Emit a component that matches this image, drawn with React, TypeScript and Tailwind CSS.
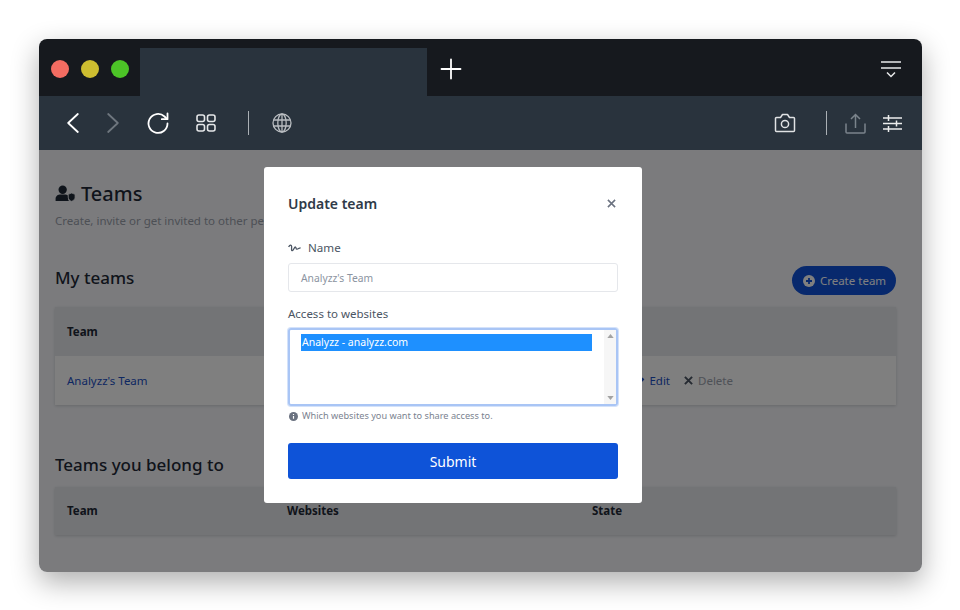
import React from "react";

const font = { fontFamily: '"Noto Sans", sans-serif' };

function TopBar() {
  return (
    <div className="flex h-[57px] shrink-0 bg-[#16191e]">
      <div className="flex w-[101px] shrink-0 items-center gap-[12px] pl-[12px] pt-[2px]">
        <span className="h-[18px] w-[18px] rounded-full bg-[#f36c62]" />
        <span className="h-[18px] w-[18px] rounded-full bg-[#cdbd30]" />
        <span className="h-[18px] w-[18px] rounded-full bg-[#4cc427]" />
      </div>
      <div className="mt-[9px] h-[48px] w-[287px] shrink-0 bg-[#29333d]" />
      <div className="flex w-[48px] shrink-0 items-center justify-center pt-[3px] text-white">
        <svg viewBox="0 0 24 24" fill="none" stroke="currentColor" strokeLinecap="round" className="h-[24px] w-[24px]">
          <path d="M12 2.500v19M2.500 12h19" strokeWidth="1.800" />
        </svg>
      </div>
      <div className="flex flex-1 items-center justify-end pr-[21px] pt-[3px] text-[#e8e9ea]">
        <svg viewBox="0 0 20 17" fill="none" stroke="currentColor" strokeWidth="1.500" className="h-[17px] w-[20px]">
          <path d="M0 1h20M0 7h20M6 11.500l4 4 4-4" />
        </svg>
      </div>
    </div>
  );
}

function ToolBar() {
  return (
    <div className="flex h-[54px] shrink-0 items-center bg-[#29333d] pl-[28px] pr-[20px] text-white">
      <svg viewBox="0 0 12 20" fill="none" stroke="currentColor" strokeWidth="1.800" strokeLinecap="round" strokeLinejoin="round" className="h-[20px] w-[12px]">
        <path d="M10.800 1 1.200 10l9.600 9" />
      </svg>
      <svg viewBox="0 0 12 20" fill="none" stroke="#6e767e" strokeWidth="1.800" strokeLinecap="round" strokeLinejoin="round" className="ml-[28px] h-[20px] w-[12px]">
        <path d="M1.200 1l9.600 9-9.600 9" />
      </svg>
      <svg viewBox="0 0 22 22" fill="none" stroke="currentColor" strokeWidth="1.800" strokeLinecap="round" strokeLinejoin="round" className="ml-[28px] h-[22px] w-[22px]">
        <path d="M20.500 11.500a9.500 9.500 0 1 1-3-7L20 7" />
        <path d="M20.500 1.500V7.200h-5.700" />
      </svg>
      <svg viewBox="0 0 20 18" fill="none" stroke="#e4e6e8" strokeWidth="1.600" className="ml-[27px] h-[18px] w-[20px]">
        <rect x="1" y="1" width="7.500" height="6.500" rx="2" />
        <rect x="11.500" y="1" width="7.500" height="6.500" rx="2" />
        <rect x="1" y="10.500" width="7.500" height="6.500" rx="2" />
        <rect x="11.500" y="10.500" width="7.500" height="6.500" rx="2" />
      </svg>
      <span className="ml-[32px] h-[24px] w-[1px] bg-[#aab0b5]" />
      <svg viewBox="0 0 20 20" fill="none" stroke="#b9bdc1" strokeWidth="1.300" className="ml-[23px] h-[20px] w-[20px]">
        <circle cx="10" cy="10" r="9" />
        <ellipse cx="10" cy="10" rx="4.200" ry="9" />
        <path d="M10 1v18M1.600 7h16.800M1.600 13h16.800" />
      </svg>
      <div className="flex-1" />
      <svg viewBox="0 0 22 20" fill="none" stroke="#e0e2e4" strokeWidth="1.500" strokeLinejoin="round" className="h-[20px] w-[22px]">
        <path d="M2.500 4.500h4l2-3h5l2 3h4a1 1 0 0 1 1 1v12a1 1 0 0 1-1 1h-17a1 1 0 0 1-1-1v-12a1 1 0 0 1 1-1z" />
        <circle cx="11" cy="11" r="3.600" />
      </svg>
      <span className="ml-[30px] h-[24px] w-[1px] bg-[#aab0b5]" />
      <svg viewBox="0 0 21 21" fill="none" stroke="#7b848c" strokeWidth="1.500" className="ml-[18px] h-[21px] w-[21px]">
        <path d="M1 10.500v8.500a1 1 0 0 0 1 1h17a1 1 0 0 0 1-1v-8.500M10.500 15V1.500M6 6l4.500-4.500L15 6" />
      </svg>
      <svg viewBox="0 0 19 19" fill="none" stroke="#eceded" strokeWidth="1.500" className="ml-[17px] h-[19px] w-[19px]">
        <path d="M0 4h19M0 9.500h19M0 15h19M5.500 1v6M13.500 6.500v6M5.500 12v6" />
      </svg>
    </div>
  );
}

function Page() {
  return (
    <div className="h-full bg-[#f6f7fb] pl-[16px] pr-[26px] pt-[30px] text-[#1f2937]">
      <div className="flex h-[27px] items-center gap-[5px]">
        <svg viewBox="0 0 22 18" className="h-[17px] w-[21px]" fill="#1f2937">
          <circle cx="8" cy="5" r="4.400" />
          <path d="M0.500 17v-2.500C0.500 11.500 3 10 6 10h4c1.600 0 2.800.4 3.600 1v3c0 1.300.4 2.300 1.200 3z" />
          <path d="M17.500 8.500l3.600 1.400v3c0 2.200-1.500 3.600-3.600 4.400-2.100-.8-3.600-2.200-3.600-4.400v-3z" stroke="#f6f7fb" strokeWidth="0.800" />
        </svg>
        <h1 className="text-[20px] font-medium leading-[27px]">Teams</h1>
      </div>
      <p className="mt-[4px] text-[11.500px] leading-[20px] text-[#9aa0ab]">Create, invite or get invited to other people's teams.</p>
      <div className="mt-[35px] flex h-[29px] items-start justify-between">
        <h2 className="text-[17px] font-medium leading-[24px]">My teams</h2>
        <div className="flex h-[29px] w-[104px] items-center justify-center gap-[5px] rounded-full bg-[#1153da] pl-[1px] text-[11.500px] text-white">
          <svg viewBox="0 0 12 12" className="h-[12px] w-[12px]">
            <circle cx="6" cy="6" r="6" fill="#fff" />
            <path d="M6 3v6M3 6h6" stroke="#1153da" strokeWidth="1.800" />
          </svg>
          Create team
        </div>
      </div>
      <div className="mt-[12px] shadow-[0_1px_3px_rgba(0,0,0,0.16)]">
        <div className="flex h-[49px] items-center bg-[#e7e8ec] pl-[12px] text-[11.500px] font-bold">Team</div>
        <div className="flex h-[49px] items-center justify-between bg-[#fefefe] pl-[12px] pr-[163px] text-[11.500px]">
          <span className="text-[#1a4fc4]">Analyzz's Team</span>
          <div className="flex items-center gap-[14px]">
            <span className="flex items-center gap-[4px] text-[#1a4fc4]">
              <svg viewBox="0 0 8 8" className="h-[8px] w-[8px]" fill="#1a4fc4">
                <path d="M0 8l.8-2.600L5.600.6 7.400 2.400 2.600 7.200z" />
              </svg>
              Edit
            </span>
            <span className="flex items-center gap-[5px] text-[#9ca3af]">
              <svg viewBox="0 0 10 10" className="h-[9px] w-[9px]" stroke="#4b5563" strokeWidth="2.200">
                <path d="M1 1l8 8M9 1l-8 8" />
              </svg>
              Delete
            </span>
          </div>
        </div>
      </div>
      <h2 className="mt-[47px] text-[17px] font-medium leading-[26px]">Teams you belong to</h2>
      <div className="mt-[9px] grid h-[48px] grid-cols-[220px_305px_1fr] items-center bg-[#e7e8ec] pl-[12px] text-[11.500px] font-bold shadow-[0_1px_3px_rgba(0,0,0,0.16)]">
        <span>Team</span>
        <span>Websites</span>
        <span>State</span>
      </div>
    </div>
  );
}

function Modal() {
  return (
    <div className="absolute inset-0 bg-black/50">
      <div className="absolute left-[225px] top-[17px] h-[336px] w-[378px] rounded-[3px] bg-white px-[24px] pt-[26px] text-[#374151]">
        <div className="flex h-[22px] items-center justify-between pr-[2px]">
          <h3 className="text-[14px] font-semibold leading-[22px] text-[#2f3a48]">Update team</h3>
          <svg viewBox="0 0 10 10" className="-mt-[2px] h-[9px] w-[9px]" stroke="#6b7280" strokeWidth="1.700">
            <path d="M1 1l8 8M9 1l-8 8" />
          </svg>
        </div>
        <div className="mt-[24px] flex h-[18px] items-center gap-[7px] text-[11.600px] text-[#4b5563]">
          <svg viewBox="0 0 13 9" className="h-[9px] w-[13px]" fill="none" stroke="#4b5563" strokeWidth="1.300">
            <path d="M.6 3C2 .6 3.400.8 3.600 2.400S3 7 4.400 6.600 6.400 2.600 7.400 3 7.600 5.400 9 5.200s2-1.400 3.600-1.400" />
          </svg>
          Name
        </div>
        <div className="mt-[6px] flex h-[29px] items-center rounded-[3px] border border-[#e5e7eb] pl-[12px] pt-[3px] text-[10.300px] text-[#8c94a1]">Analyzz's Team</div>
        <div className="mt-[13px] text-[11.500px] leading-[18px] text-[#4b5563]">Access to websites</div>
        <div className="mt-[5px] flex h-[78px] rounded-[3px] border-2 border-[#a9c5f5] pl-[11px] pt-[4px] shadow-[0_0_0_1px_rgba(169,197,245,0.5)]">
          <div className="mr-[12px] h-[17px] flex-1 bg-[#1e90ff] pl-[1px] text-[10.500px] leading-[17px] text-white">Analyzz - analyzz.com</div>
          <div className="-mt-[4px] flex w-[12px] flex-col items-center justify-between bg-[#f6f6f6] py-[4px]">
            <svg viewBox="0 0 8 5" className="h-[4px] w-[7px]" fill="#a3a3a3"><path d="M4 0l4 5H0z" /></svg>
            <svg viewBox="0 0 8 5" className="h-[4px] w-[7px]" fill="#a3a3a3"><path d="M4 5l4-5H0z" /></svg>
          </div>
        </div>
        <div className="mt-[3px] flex h-[14px] items-center gap-[4px] pl-[1px] text-[9.200px] text-[#7b8390]">
          <svg viewBox="0 0 10 10" className="h-[9px] w-[9px]">
            <circle cx="5" cy="5" r="5" fill="#6b7280" />
            <path d="M5 4.400v3M5 2.200v1" stroke="#fff" strokeWidth="1.300" />
          </svg>
          Which websites you want to share access to.
        </div>
        <div className="mt-[20px] flex h-[36px] items-center justify-center rounded-[3px] bg-[#0e53d8] text-[14px] text-white">Submit</div>
      </div>
    </div>
  );
}

export default function App() {
  return (
    <div style={font} className="h-[610px] w-[960px] overflow-hidden bg-white pl-[39px] pt-[39px]">
      <div className="flex h-[533px] w-[883px] flex-col overflow-hidden rounded-[8px] shadow-[0_10px_28px_rgba(0,0,0,0.32)]">
        <TopBar />
        <ToolBar />
        <div className="relative flex-1">
          <Page />
          <Modal />
        </div>
      </div>
    </div>
  );
}
